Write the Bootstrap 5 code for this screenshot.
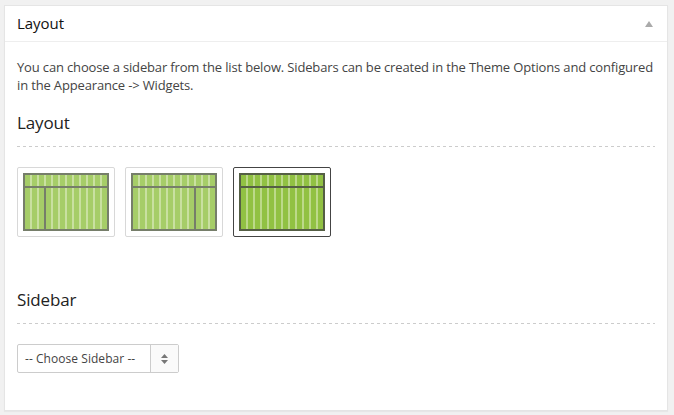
<!DOCTYPE html>
<html lang="en">
<head>
<meta charset="utf-8">
<title>Layout</title>
<link href="https://cdn.jsdelivr.net/npm/bootstrap@5.3.0/dist/css/bootstrap.min.css" rel="stylesheet">
<style>
body{background:#f1f1f1;font-family:"Open Sans",sans-serif;font-size:13px;line-height:18px;color:#444;height:415px;overflow:hidden;padding:5px 6px 4px 4px}
.metabox{height:406px;border:1px solid #e5e5e5;box-shadow:0 1px 1px rgba(0,0,0,.04)}
.metabox-head{height:36px;padding:0 14px 0 12px;border-bottom:1px solid #eee}
.metabox-title{font-size:15px;line-height:35px;font-weight:500;color:#111;letter-spacing:-.05px}
.metabox-body{padding:16px 12px 0}
.intro{height:36px;white-space:nowrap;letter-spacing:-.153px}
.section-title{font-size:17px;line-height:24px;font-weight:400;color:#222;letter-spacing:-.15px;margin:17px 0 11px}
.section-title.later{margin-top:51px}
.dashes{height:1px;background:repeating-linear-gradient(90deg,#ccc 0 3px,transparent 3px 6px);margin-bottom:20px}
.thumbs{gap:10px}
.thumb{width:98px;height:70px;padding:5px;border:1px solid #d8d8d8;border-radius:2px;background:#fff}
.thumb svg{opacity:.8}
.thumb.chosen{border-color:#444}
.thumb.chosen svg{opacity:1}
.turf{fill:#91c143}
.stripes{stroke:#bcd98a;stroke-width:56;stroke-dasharray:2 5}
.frame{fill:none;stroke:#555f45;stroke-width:2}
.chooser{width:162px;height:29px;border:1px solid #ccc;border-radius:2px;font-size:12px;line-height:27px;letter-spacing:.05px}
.chooser-label{width:133px;padding-left:7px;border-right:1px solid #ccc;white-space:nowrap}
.chooser-arrows{background:#fafafa}
</style>
<script src="https://cdn.jsdelivr.net/npm/bootstrap@5.3.0/dist/js/bootstrap.bundle.min.js"></script>
</head>
<body>
<section class="metabox card rounded-0">
  <header class="metabox-head d-flex justify-content-between align-items-center">
    <h2 class="metabox-title m-0">Layout</h2>
    <svg width="8" height="6" viewBox="0 0 8 6"><path d="M4 0 8 6H0Z" fill="#aaa"/></svg>
  </header>
  <div class="metabox-body">
    <p class="intro m-0">You can choose a sidebar from the list below. Sidebars can be created in the Theme Options and configured<br>in the Appearance -&gt; Widgets.</p>
    <h3 class="section-title">Layout</h3>
    <div class="dashes"></div>
    <div class="thumbs d-flex">
      <div class="thumb"><svg class="d-block" width="86" height="58"><path class="turf" d="M1 1H85V57H1Z"/><path class="stripes" d="M7 29H79"/><path class="frame" d="M1 1H85V57H1ZM1 14H85M22 14V57"/></svg></div>
      <div class="thumb"><svg class="d-block" width="86" height="58"><path class="turf" d="M1 1H85V57H1Z"/><path class="stripes" d="M7 29H79"/><path class="frame" d="M1 1H85V57H1ZM1 14H85M64 14V57"/></svg></div>
      <div class="thumb chosen"><svg class="d-block" width="86" height="58"><path class="turf" d="M1 1H85V57H1Z"/><path class="stripes" d="M7 29H79"/><path class="frame" d="M1 1H85V57H1ZM1 14H85"/></svg></div>
    </div>
    <h3 class="section-title later">Sidebar</h3>
    <div class="dashes"></div>
    <div class="chooser d-flex" role="button">
      <span class="chooser-label">-- Choose Sidebar --</span>
      <span class="chooser-arrows flex-fill d-flex align-items-center justify-content-center"><svg width="7" height="10" viewBox="0 0 7 10"><path d="M3.5 0 7 4H0ZM0 6H7L3.5 10Z" fill="#777"/></svg></span>
    </div>
  </div>
</section>
</body>
</html>
